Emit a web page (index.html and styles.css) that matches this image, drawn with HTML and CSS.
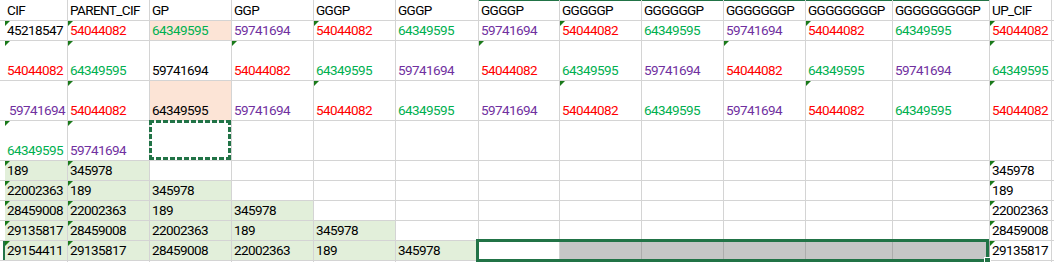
FILE: index.html
```html
<!DOCTYPE html>
<html>
<head>
<meta charset="utf-8">
<link rel="stylesheet" href="styles.css">
</head>
<body>
<div class="sheet">
  <!-- header -->
  <div class="c g"></div><div class="c">CIF</div><div class="c">PARENT_CIF</div><div class="c">GP</div><div class="c">GGP</div><div class="c">GGGP</div><div class="c">GGGP</div><div class="c hs">GGGGP</div><div class="c hs">GGGGGP</div><div class="c hs">GGGGGGP</div><div class="c hs">GGGGGGGP</div><div class="c hs">GGGGGGGGP</div><div class="c hs">GGGGGGGGGP</div><div class="c">UP_CIF</div><div class="c e"></div>
  <!-- row 1 -->
  <div class="c g"></div><div class="c t">45218547</div><div class="c t r">54044082</div><div class="c pe gn">64349595</div><div class="c p">59741694</div><div class="c t r">54044082</div><div class="c gn">64349595</div><div class="c p">59741694</div><div class="c t r">54044082</div><div class="c gn">64349595</div><div class="c p">59741694</div><div class="c t r">54044082</div><div class="c gn">64349595</div><div class="c t r">54044082</div><div class="c e"></div>
  <!-- row 2 -->
  <div class="c g"></div><div class="c t r">54044082</div><div class="c t gn">64349595</div><div class="c">59741694</div><div class="c t r">54044082</div><div class="c gn">64349595</div><div class="c p">59741694</div><div class="c t r">54044082</div><div class="c gn">64349595</div><div class="c p">59741694</div><div class="c t r">54044082</div><div class="c gn">64349595</div><div class="c p">59741694</div><div class="c t gn">64349595</div><div class="c e"></div>
  <!-- row 3 -->
  <div class="c g"></div><div class="c p ind">59741694</div><div class="c t r">54044082</div><div class="c pe">64349595</div><div class="c p">59741694</div><div class="c t r">54044082</div><div class="c gn">64349595</div><div class="c p">59741694</div><div class="c t r">54044082</div><div class="c gn">64349595</div><div class="c p">59741694</div><div class="c t r">54044082</div><div class="c gn">64349595</div><div class="c t r">54044082</div><div class="c e"></div>
  <!-- row 4 -->
  <div class="c g"></div><div class="c t gn">64349595</div><div class="c t p">59741694</div><div class="c"><div class="ants"></div></div><div class="c"></div><div class="c"></div><div class="c"></div><div class="c"></div><div class="c"></div><div class="c"></div><div class="c"></div><div class="c"></div><div class="c"></div><div class="c"></div><div class="c e"></div>
  <!-- row 5 -->
  <div class="c g"></div><div class="c t fg">189</div><div class="c t fg">345978</div><div class="c"></div><div class="c"></div><div class="c"></div><div class="c"></div><div class="c"></div><div class="c"></div><div class="c"></div><div class="c"></div><div class="c"></div><div class="c"></div><div class="c t">345978</div><div class="c e"></div>
  <!-- row 6 -->
  <div class="c g"></div><div class="c t fg">22002363</div><div class="c t fg">189</div><div class="c fg">345978</div><div class="c"></div><div class="c"></div><div class="c"></div><div class="c"></div><div class="c"></div><div class="c"></div><div class="c"></div><div class="c"></div><div class="c"></div><div class="c t">189</div><div class="c e"></div>
  <!-- row 7 -->
  <div class="c g"></div><div class="c t fg">28459008</div><div class="c t fg">22002363</div><div class="c fg">189</div><div class="c fg">345978</div><div class="c"></div><div class="c"></div><div class="c"></div><div class="c"></div><div class="c"></div><div class="c"></div><div class="c"></div><div class="c"></div><div class="c t">22002363</div><div class="c e"></div>
  <!-- row 8 -->
  <div class="c g"></div><div class="c t fg">29135817</div><div class="c t fg">28459008</div><div class="c fg">22002363</div><div class="c fg">189</div><div class="c fg">345978</div><div class="c"></div><div class="c"></div><div class="c"></div><div class="c"></div><div class="c"></div><div class="c"></div><div class="c"></div><div class="c t">28459008</div><div class="c e"></div>
  <!-- row 9 -->
  <div class="c g rowsel"></div><div class="c t fg">29154411</div><div class="c t fg">29135817</div><div class="c fg">28459008</div><div class="c fg">22002363</div><div class="c fg">189</div><div class="c fg">345978</div><div class="c"><div class="selbox"></div></div><div class="c sel"></div><div class="c sel"></div><div class="c sel"></div><div class="c sel"></div><div class="c sel"></div><div class="c t">29135817</div><div class="c e"></div>
  <!-- row 10 (partial) -->
  <div class="c g"></div><div class="c"></div><div class="c"></div><div class="c"></div><div class="c"></div><div class="c"></div><div class="c"></div><div class="c"></div><div class="c"></div><div class="c"></div><div class="c"></div><div class="c"></div><div class="c"></div><div class="c"></div><div class="c e"></div>
</div>
</body>
</html>
```

FILE: styles.css
```css
html, body {
  margin: 0;
  padding: 0;
  background: #ffffff;
}

.sheet {
  display: grid;
  grid-template-columns: 5px 63px 82px 82px 82px 82px 83px 81px 82px 82px 82px 87px 97px 62px 1fr;
  grid-template-rows: 21px 20px 40px 40px 40px 20px 20px 20px 20px 20px 20px;
  width: 1054px;
  height: 262px;
  overflow: hidden;
  font-family: Roboto, "Liberation Sans", sans-serif;
  font-size: 13.5px;
  letter-spacing: -0.6px;
  line-height: 15px;
  color: #000000;
}

.c {
  position: relative;
  box-sizing: border-box;
  border-right: 1px solid #d4d4d4;
  border-bottom: 1px solid #d4d4d4;
  display: flex;
  align-items: flex-end;
  padding: 0 0 2px 2px;
  white-space: nowrap;
}

.c.g {
  border-right: none;
  padding: 0;
}

.c.e {
  border-right: none;
}

.hs {
  box-shadow: inset 0 1px 0 #217346;
}

.r { color: #ff0000; }
.gn { color: #00b050; }
.p { color: #7030a0; }

.pe { background: #fce4d6; }
.fg { background: #e2efda; }

.ind { padding-left: 4px; }

.sel {
  background: #c6c6c6;
  border-right-color: #acacac;
}

.t::before {
  content: "";
  position: absolute;
  top: 0;
  left: 0;
  width: 0;
  height: 0;
  border-top: 5px solid #1a7a1a;
  border-right: 5px solid transparent;
}

.rowsel {
  box-shadow: inset -2px 0 0 #217346;
}

.ants {
  position: absolute;
  top: -1px;
  left: -1px;
  right: 0;
  bottom: 0;
  z-index: 2;
  background:
    repeating-linear-gradient(90deg, #217346 0 5px, transparent 5px 7px) top left / 100% 3px no-repeat,
    repeating-linear-gradient(90deg, #217346 0 5px, transparent 5px 7px) bottom left / 100% 3px no-repeat,
    repeating-linear-gradient(180deg, #217346 0 5px, transparent 5px 7px) top left / 3px 100% no-repeat,
    repeating-linear-gradient(180deg, #217346 0 5px, transparent 5px 7px) top right / 3px 100% no-repeat;
}

.selbox {
  position: absolute;
  top: -2px;
  left: -3px;
  width: 513px;
  height: 23px;
  box-sizing: border-box;
  border: 3px solid #217346;
  z-index: 3;
}

.selbox::after {
  content: "";
  position: absolute;
  right: -5px;
  bottom: -5px;
  width: 5px;
  height: 5px;
  background: #217346;
  border: 1px solid #ffffff;
}
```
